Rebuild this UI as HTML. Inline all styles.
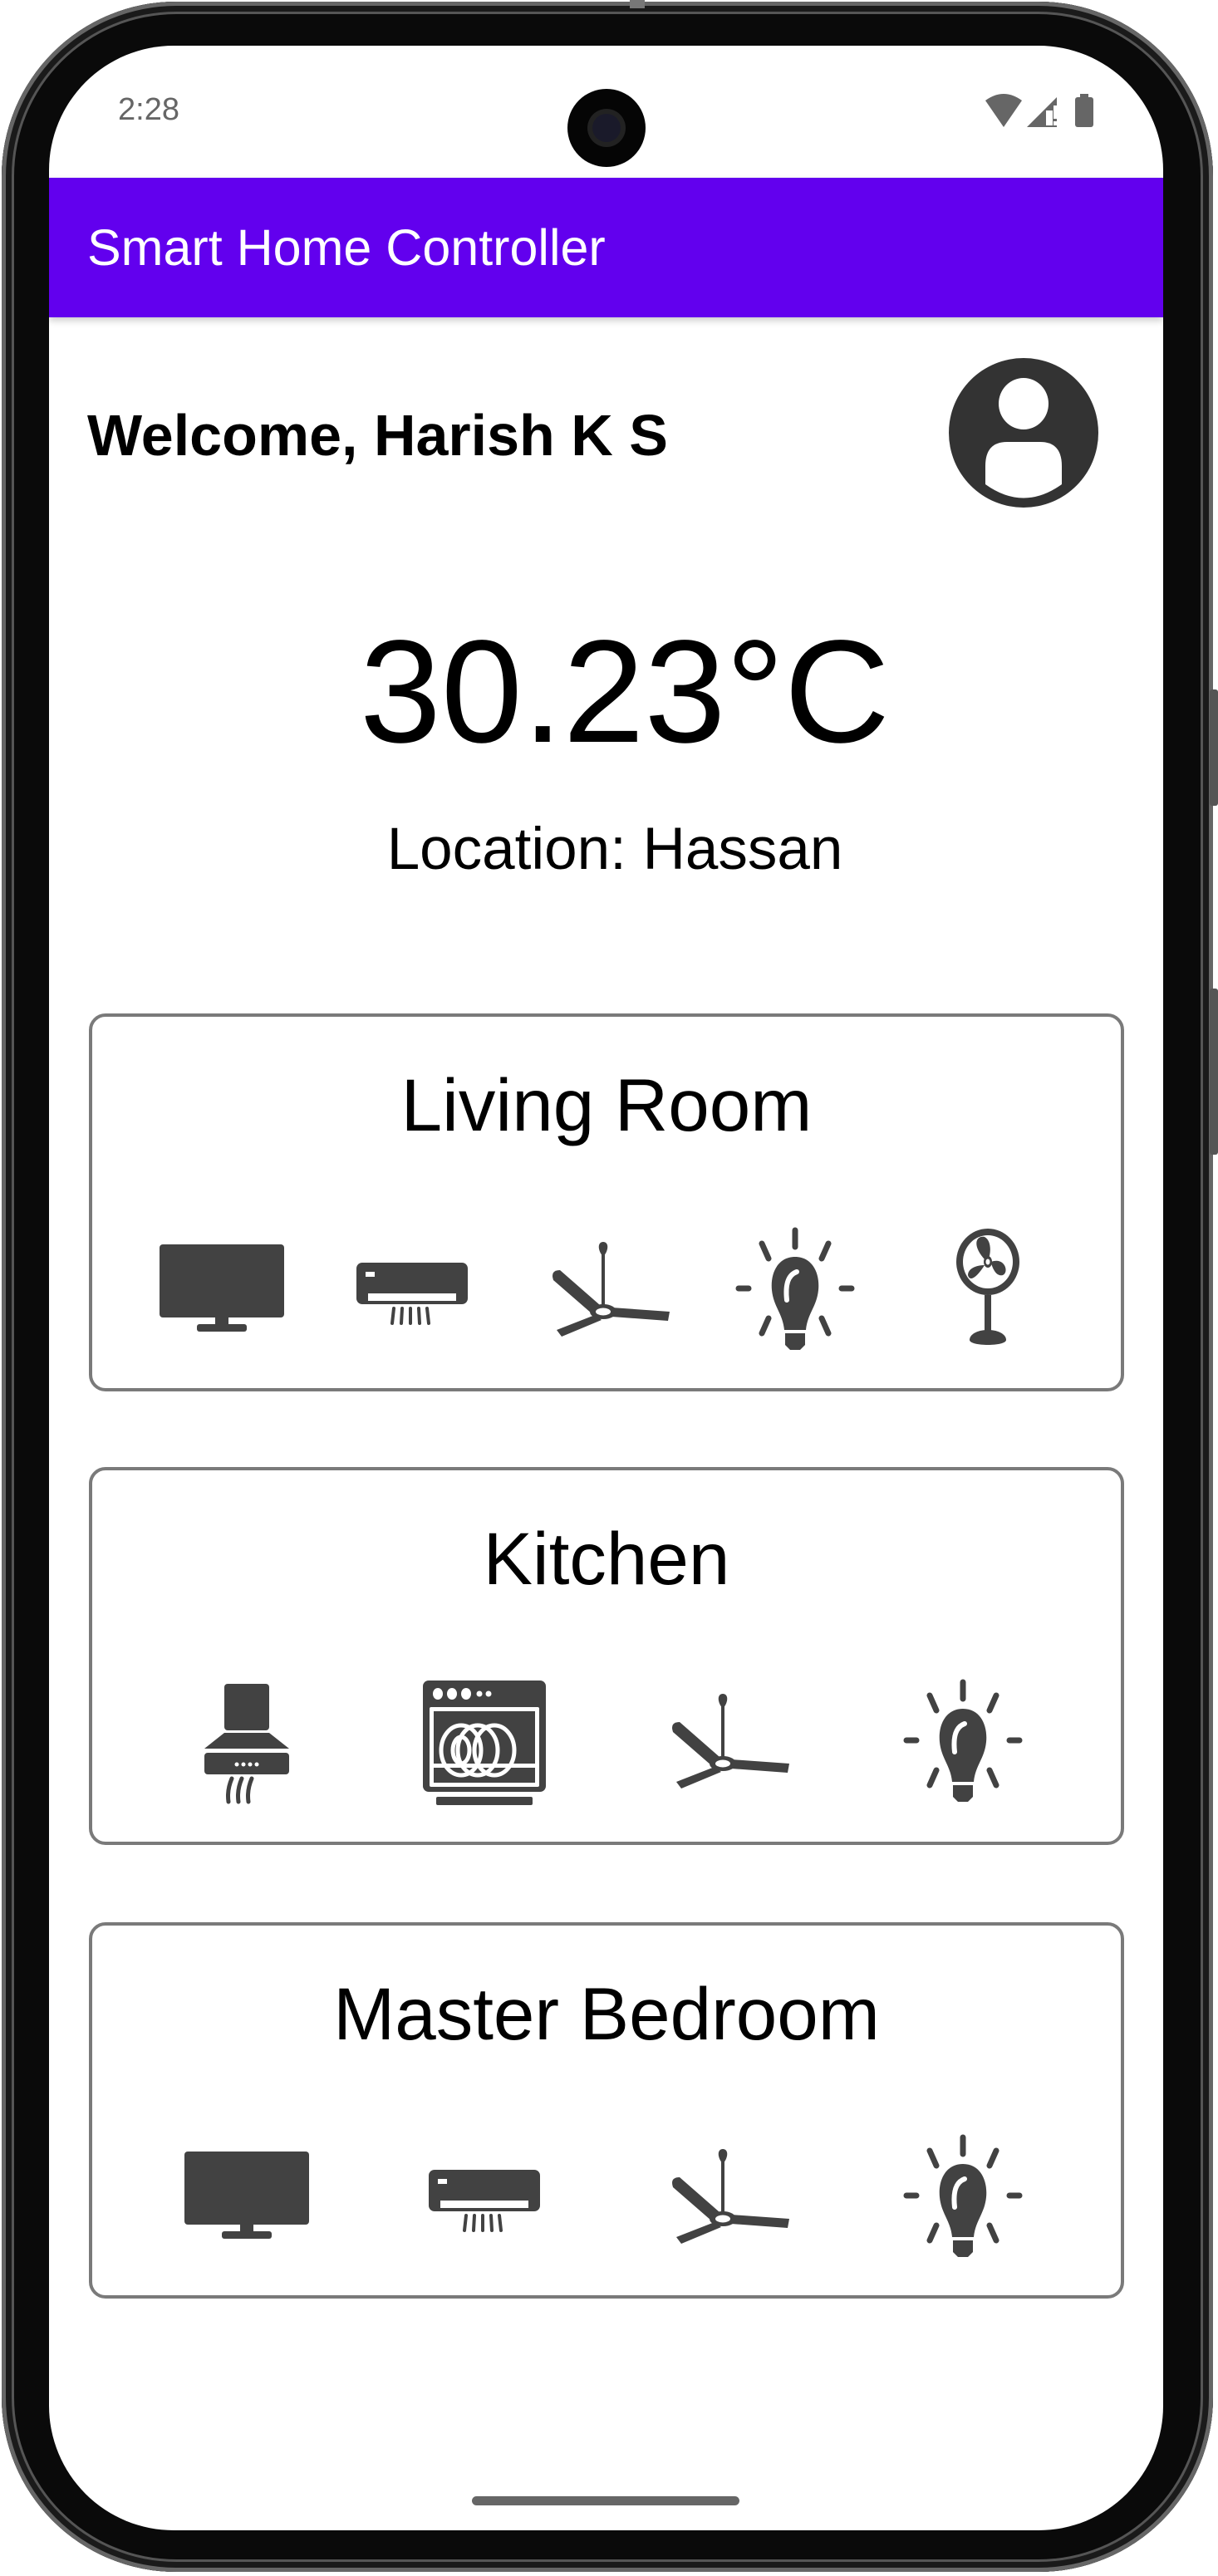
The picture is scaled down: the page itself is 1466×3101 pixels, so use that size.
<!DOCTYPE html>
<html><head><meta charset="utf-8">
<style>
html,body{margin:0;padding:0;background:#fff;}
body{width:1466px;height:3101px;position:relative;overflow:hidden;font-family:"Liberation Sans",sans-serif;}
.frame{position:absolute;left:2px;top:2px;width:1458px;height:3094px;border-radius:210px;background:#0a0a0a;box-shadow:inset 0 0 0 5px #666,inset 0 0 0 12px #1a1a1a,inset 0 0 0 15px #555;}
.screen{position:absolute;left:59px;top:55px;width:1341px;height:2991px;border-radius:150px;background:#fff;overflow:hidden;}
.abs{position:absolute;}
.appbar{left:0;top:159px;width:1341px;height:168px;background:#6200EE;box-shadow:0 4px 8px rgba(0,0,0,.2);}
.card{position:absolute;left:48px;width:1246px;border:4px solid #7a7a7a;border-radius:20px;box-sizing:border-box;}
.ct{position:absolute;left:0;width:100%;text-align:center;font-size:89px;color:#000;}
svg.i{position:absolute;width:160px;height:160px;}
</style></head><body>
<div class="frame"></div>
<div class="abs" style="left:758px;top:0;width:18px;height:10px;background:#777"></div>
<div class="abs" style="left:1456px;top:830px;width:10px;height:140px;background:#555;border-radius:3px"></div>
<div class="abs" style="left:1456px;top:1190px;width:10px;height:200px;background:#555;border-radius:3px"></div>
<div class="screen">
  <div class="abs" style="left:83px;top:56px;font-size:38px;color:#666;">2:28</div>
  <div class="abs" style="left:624px;top:52px;width:94px;height:94px;border-radius:50%;background:#050505;"><div style="position:absolute;left:30px;top:30px;width:34px;height:34px;border-radius:50%;background:#1a1a2a;box-shadow:0 0 0 6px #222"></div></div>
  <svg class="abs" style="left:1125px;top:58px" width="140" height="44" viewBox="0 0 140 44">
    <path d="M2 8 Q24 -8 46 8 L24 40 Z" fill="#666"/>
    <path d="M52 40 L88 4 L88 40 Z" fill="#666"/>
    <rect x="75" y="20" width="8" height="18" fill="#fff"/>
    <rect x="84" y="14" width="5" height="16" fill="#fff"/><rect x="84" y="33" width="5" height="5" fill="#fff"/>
    <rect x="110" y="4" width="22" height="36" rx="3" fill="#666"/><rect x="116" y="0" width="10" height="5" fill="#666"/>
  </svg>
  <div class="abs appbar"></div>
  <div class="abs" style="left:46px;top:208px;font-size:61px;color:#fff;line-height:70px;">Smart Home Controller</div>
  <div class="abs" style="left:46px;top:430px;font-size:70px;font-weight:bold;color:#000;line-height:78px;">Welcome, Harish K S</div>
  <svg class="abs" style="left:1083px;top:376px" width="180" height="180" viewBox="0 0 180 180">
    <circle cx="90" cy="90" r="90" fill="#333"/>
    <ellipse cx="90" cy="55" rx="30" ry="31" fill="#fff"/>
    <path d="M44 152 L44 130 Q44 101 70 101 L110 101 Q136 101 136 130 L136 152 Q90 185 44 152 Z" fill="#fff"/>
  </svg>
  <div class="abs" style="left:0;width:1386px;top:678px;text-align:center;font-size:176px;line-height:200px;color:#000;">30.23°C</div>
  <div class="abs" style="left:0;width:1362px;top:928px;text-align:center;font-size:71px;line-height:80px;color:#000;">Location: Hassan</div>

  <div class="card" style="top:1165px;height:455px;"><div class="ct" style="top:56px;line-height:100px">Living Room</div></div>
  <div class="card" style="top:1711px;height:455px;"><div class="ct" style="top:56px;line-height:100px">Kitchen</div></div>
  <div class="card" style="top:2259px;height:453px;"><div class="ct" style="top:56px;line-height:100px">Master Bedroom</div></div>

  <svg width="0" height="0" style="position:absolute">
    <defs>
      <g id="tv" fill="#424242"><rect x="5" y="25" width="150" height="88" rx="4"/><rect x="72" y="113" width="16" height="10"/><rect x="50" y="121" width="60" height="9" rx="3"/></g>
      <g id="ac" fill="#424242"><rect x="13" y="47" width="134" height="50" rx="7"/><rect x="27" y="84" width="106" height="9" fill="#fff"/><rect x="24" y="58" width="11" height="6" fill="#fff"/><g stroke="#424242" stroke-width="4" stroke-linecap="round"><path d="M58 102 L56 120 M68 102 L67 120 M78 102 L78 120 M88 102 L89 120 M98 102 L100 120"/></g></g>
      <g id="fan" fill="#424242"><path d="M76 22 C83 22 83 32 76 40 C69 32 69 22 76 22Z"/><rect x="74" y="36" width="4" height="64"/><path d="M72 98 L24 56 Q12 56 16 68 L62 108 Z"/><path d="M86 101 L156 106 L154 117 L86 112 Z"/><path d="M66 110 L20 128 L26 136 L74 116 Z"/><ellipse cx="76" cy="106" rx="16" ry="9"/><ellipse cx="76" cy="106" rx="9" ry="4.5" fill="#fff"/></g>
      <g id="bulb" fill="#424242"><g stroke="#424242" stroke-width="7" stroke-linecap="round"><path d="M80 8 L80 28 M40 24 L48 42 M120 24 L112 42 M12 78 L24 78 M136 78 L148 78 M40 132 L48 114 M120 132 L112 114"/></g><path d="M80 40 C101 40 110 60 108 80 C106 100 95 108 93 128 L67 128 C65 108 54 100 52 80 C50 60 59 40 80 40 Z"/><path d="M68 132 L92 132 L92 146 L86 152 L74 152 L68 146 Z"/><path d="M70 92 C68 74 71 62 82 58" stroke="#fff" stroke-width="6" fill="none" stroke-linecap="round"/></g>
      <g id="sfan" fill="#424242"><ellipse cx="80" cy="46" rx="38" ry="40"/><ellipse cx="80" cy="46" rx="30" ry="32" fill="#fff"/><path d="M77 44 C60 26 66 14 76 16 C84 20 84 34 81 42Z M84 46 C100 40 106 58 98 62 C90 64 86 54 84 48Z M76 50 C66 66 58 70 56 62 C56 54 66 50 76 50Z"/><ellipse cx="80" cy="46" rx="5" ry="7"/><ellipse cx="80" cy="46" rx="2.5" ry="3.5" fill="#fff"/><rect x="76" y="86" width="8" height="48"/><path d="M80 128 C94 128 102 134 102 140 C102 148 58 148 58 140 C58 134 66 128 80 128Z"/></g>
      <g id="hood" fill="#424242"><rect x="53" y="10" width="54" height="56" rx="4"/><path d="M53 69 L107 69 L131 88 L29 88 Z"/><rect x="29" y="93" width="102" height="26" rx="4"/><g fill="#fff"><circle cx="68" cy="107" r="2.5"/><circle cx="76" cy="107" r="2.5"/><circle cx="84" cy="107" r="2.5"/><circle cx="92" cy="107" r="2.5"/></g><g stroke="#424242" stroke-width="5" fill="none" stroke-linecap="round"><path d="M62 124 Q56 138 58 152 M74 124 Q68 138 70 152 M86 124 Q80 138 82 152"/></g></g>
      <g id="dish" fill="#424242"><rect x="6" y="6" width="148" height="134" rx="7"/><rect x="22" y="146" width="116" height="10" rx="2"/><g fill="#fff"><ellipse cx="24" cy="22" rx="6" ry="7"/><ellipse cx="41" cy="22" rx="6" ry="7"/><ellipse cx="58" cy="22" rx="6" ry="7"/><circle cx="74" cy="22" r="3.5"/><circle cx="85" cy="22" r="3.5"/><rect x="14" y="38" width="132" height="96" rx="2"/></g><rect x="19" y="43" width="122" height="86"/><g fill="none" stroke="#fff" stroke-width="5"><ellipse cx="52" cy="90" rx="24" ry="30"/><ellipse cx="52" cy="90" rx="10" ry="16"/><ellipse cx="72" cy="90" rx="24" ry="30"/><ellipse cx="92" cy="90" rx="24" ry="30"/></g><rect x="19" y="106" width="122" height="5" fill="#fff"/></g>
    </defs>
  </svg>
  <!-- living room -->
  <svg class="i" viewBox="0 0 160 160" style="left:128px;top:1418px"><use href="#tv"/></svg>
  <svg class="i" viewBox="0 0 160 160" style="left:357px;top:1418px"><use href="#ac"/></svg>
  <svg class="i" viewBox="0 0 160 160" style="left:591px;top:1418px"><use href="#fan"/></svg>
  <svg class="i" viewBox="0 0 160 160" style="left:818px;top:1418px"><use href="#bulb"/></svg>
  <svg class="i" viewBox="0 0 160 160" style="left:1050px;top:1418px"><use href="#sfan"/></svg>
  <!-- kitchen -->
  <svg class="i" viewBox="0 0 160 160" style="left:158px;top:1962px"><use href="#hood"/></svg>
  <svg class="i" viewBox="0 0 160 160" style="left:444px;top:1962px"><use href="#dish"/></svg>
  <svg class="i" viewBox="0 0 160 160" style="left:735px;top:1962px"><use href="#fan"/></svg>
  <svg class="i" viewBox="0 0 160 160" style="left:1020px;top:1962px"><use href="#bulb"/></svg>
  <!-- bedroom -->
  <svg class="i" viewBox="0 0 160 160" style="left:158px;top:2510px"><use href="#tv"/></svg>
  <svg class="i" viewBox="0 0 160 160" style="left:444px;top:2510px"><use href="#ac"/></svg>
  <svg class="i" viewBox="0 0 160 160" style="left:735px;top:2510px"><use href="#fan"/></svg>
  <svg class="i" viewBox="0 0 160 160" style="left:1020px;top:2510px"><use href="#bulb"/></svg>

  <div class="abs" style="left:509px;top:2950px;width:322px;height:11px;border-radius:6px;background:#666;"></div>
</div>
</body></html>
